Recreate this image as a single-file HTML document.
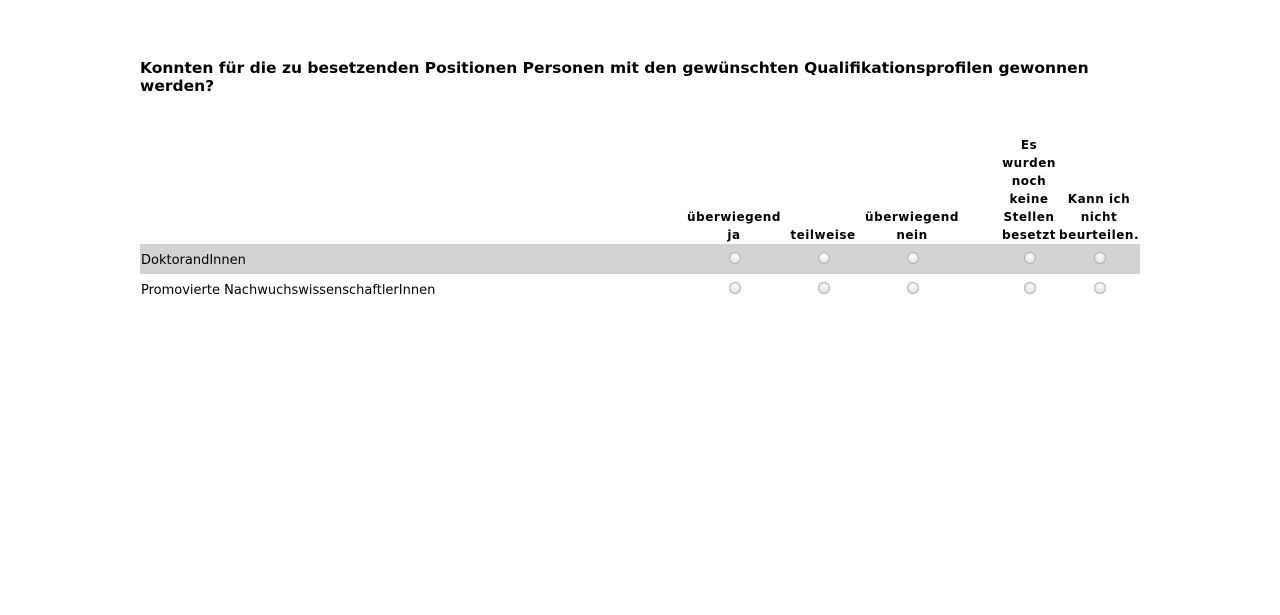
<!DOCTYPE html>
<html><head><meta charset="utf-8"><style>
body{margin:0;background:#fff;font-family:"DejaVu Sans","Liberation Sans",sans-serif;color:#000;}
.t{position:absolute;left:140px;top:59px;width:1000px;font-weight:bold;font-size:15.5px;line-height:18px;}
.h{position:absolute;font-weight:bold;font-size:12px;letter-spacing:0.5px;line-height:18px;text-align:center;bottom:371px;transform:translateX(-50%);white-space:nowrap;}
.row{position:absolute;left:140px;width:1000px;height:30px;}
.lab{position:absolute;left:1px;font-size:13px;line-height:30px;top:2px;}
.r{position:absolute;width:10px;height:10px;border:1px solid #b4b4b4;border-radius:50%;background:radial-gradient(circle at 50% 35%,#fafafa,#dcdcdc);top:8px;}
</style></head><body>
<div class="t">Konnten für die zu besetzenden Positionen Personen mit den gewünschten Qualifikationsprofilen gewonnen werden?</div>
<div class="h" style="left:734px">überwiegend<br>ja</div>
<div class="h" style="left:823px">teilweise</div>
<div class="h" style="left:912px">überwiegend<br>nein</div>
<div class="h" style="left:1029px">Es<br>wurden<br>noch<br>keine<br>Stellen<br>besetzt</div>
<div class="h" style="left:1099px">Kann ich<br>nicht<br>beurteilen.</div>
<div class="row" style="top:244px;background:#d3d3d3">
<div class="lab">DoktorandInnen</div>
<div class="r" style="left:589px"></div><div class="r" style="left:678px"></div><div class="r" style="left:767px"></div><div class="r" style="left:884px"></div><div class="r" style="left:954px"></div>
</div>
<div class="row" style="top:274px">
<div class="lab">Promovierte NachwuchswissenschaftlerInnen</div>
<div class="r" style="left:589px"></div><div class="r" style="left:678px"></div><div class="r" style="left:767px"></div><div class="r" style="left:884px"></div><div class="r" style="left:954px"></div>
</div>
</body></html>
